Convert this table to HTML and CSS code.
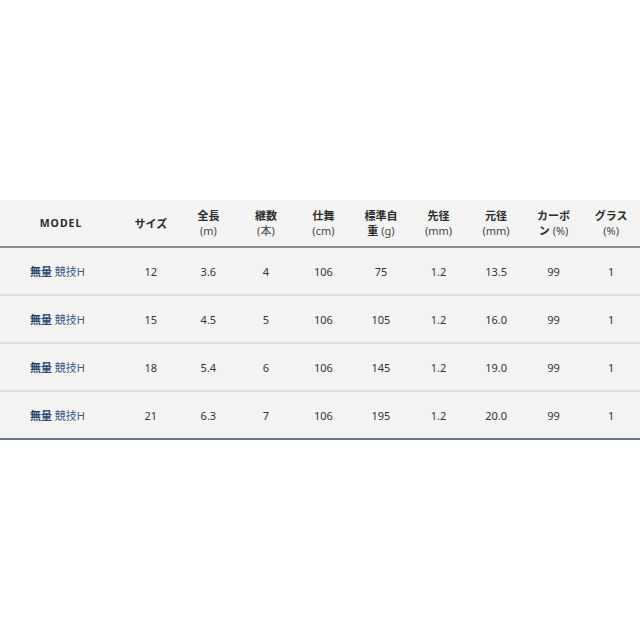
FILE: index.html
```html
<!DOCTYPE html>
<html lang="ja">
<head>
<meta charset="utf-8">
<link rel="stylesheet" href="styles.css">
</head>
<body>
<div class="page">
  <table class="spec">
    <colgroup>
      <col class="c-model">
      <col span="9" class="c-num">
    </colgroup>
    <thead>
      <tr>
        <th class="model-h">MODEL</th>
        <th>サイズ</th>
        <th>全長<br><span class="unit">(m)</span></th>
        <th>継数<br><span class="unit">(本)</span></th>
        <th>仕舞<br><span class="unit">(cm)</span></th>
        <th>標準自<br>重 <span class="unit">(g)</span></th>
        <th>先径<br><span class="unit">(mm)</span></th>
        <th>元径<br><span class="unit">(mm)</span></th>
        <th>カーボ<br>ン <span class="unit">(%)</span></th>
        <th>グラス<br><span class="unit">(%)</span></th>
      </tr>
    </thead>
    <tbody>
      <tr>
        <td class="model"><b>無量</b> 競技H</td>
        <td>12</td><td>3.6</td><td>4</td><td>106</td><td>75</td><td>1.2</td><td>13.5</td><td>99</td><td>1</td>
      </tr>
      <tr>
        <td class="model"><b>無量</b> 競技H</td>
        <td>15</td><td>4.5</td><td>5</td><td>106</td><td>105</td><td>1.2</td><td>16.0</td><td>99</td><td>1</td>
      </tr>
      <tr>
        <td class="model"><b>無量</b> 競技H</td>
        <td>18</td><td>5.4</td><td>6</td><td>106</td><td>145</td><td>1.2</td><td>19.0</td><td>99</td><td>1</td>
      </tr>
      <tr class="last">
        <td class="model"><b>無量</b> 競技H</td>
        <td>21</td><td>6.3</td><td>7</td><td>106</td><td>195</td><td>1.2</td><td>20.0</td><td>99</td><td>1</td>
      </tr>
    </tbody>
  </table>
</div>
</body>
</html>
```
FILE: styles.css
```css
html, body {
  margin: 0;
  padding: 0;
  background: #ffffff;
}

.page {
  padding-top: 200px;
  width: 640px;
}

.spec {
  width: 640px;
  table-layout: fixed;
  border-collapse: collapse;
  background: #f4f4f4;
  font-family: "Noto Sans", "Noto Sans CJK JP", sans-serif;
  font-size: 11px;
  color: #333333;
}

.c-model { width: 122px; }
.c-num { width: 57.5px; }

.spec th {
  height: 46px;
  padding: 0;
  font-weight: bold;
  font-size: 11px;
  line-height: 15px;
  text-align: center;
  vertical-align: middle;
  color: #2b2b2b;
  border-bottom: 2px solid #8c8c8c;
}

.spec th .unit {
  font-weight: normal;
  color: #444444;
}

.spec th.model-h {
  letter-spacing: 1px;
  font-size: 10.5px;
}

.spec td {
  height: 46px;
  padding: 0;
  text-align: center;
  vertical-align: middle;
  border-bottom: 2px solid #dddddd;
}

.spec td.model {
  text-align: left;
  padding-left: 30px;
  color: #3a5a85;
}

.spec td.model b {
  color: #2a4470;
  font-weight: bold;
}

.spec tr.last td {
  border-bottom: 2px solid #66788a;
}
```
